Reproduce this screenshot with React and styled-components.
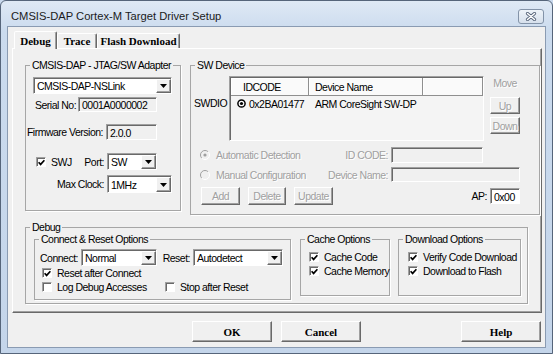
import styled, { createGlobalStyle, css } from 'styled-components';

const SANS = '"Liberation Sans", Arial, sans-serif';
const SERIF = '"Liberation Serif", "Times New Roman", serif';

const GlobalStyle = createGlobalStyle`
  html, body { margin: 0; padding: 0; }
  body { background: #c9d9ed; font-family: ${SANS}; }
  *, *::before, *::after { box-sizing: border-box; }
`;

const uiText = css`
  font-family: ${SANS};
  font-size: 10.5px;
  line-height: 12px;
  letter-spacing: -0.5px;
  color: #000;
  white-space: nowrap;
`;

const disabledText = css`
  color: #a0a0a0;
  text-shadow: 1px 1px 0 #fff;
`;

const raised = css`
  background: #f0f0f0;
  border: 1px solid;
  border-color: #fff #696969 #696969 #fff;
  box-shadow: inset -1px -1px 0 #a0a0a0;
`;

const sunken = css`
  border: 1px solid;
  border-color: #a0a0a0 #fff #fff #a0a0a0;
  box-shadow: inset 1px 1px 0 #696969;
`;

const Window = styled.div`
  width: 553px;
  height: 354px;
  display: flex;
  flex-direction: column;
  padding: 0 7px 6px;
  border: 1px solid #56657a;
  border-radius: 6px 6px 0 0;
  background: linear-gradient(#dfe9f5, #cbdbee 30px, #c4d5ea);
`;

const TitleBar = styled.div`
  height: 26px;
  flex-shrink: 0;
  display: flex;
  align-items: flex-start;
  justify-content: space-between;
  padding: 0 1px 0 3px;
`;

const Title = styled.span`
  margin-top: 8px;
  font-family: ${SANS};
  font-size: 11.2px;
  line-height: 14px;
  color: #1b1b1b;
`;

const CloseButton = styled.span`
  margin-top: 8px;
  width: 26px;
  height: 15px;
  display: flex;
  align-items: center;
  justify-content: center;
  border: 1px solid #8393a8;
  border-radius: 3px;
  background: linear-gradient(#eef3f9, #d6e0ec);
`;

const Client = styled.div`
  height: 320px;
  flex-shrink: 0;
  display: flex;
  flex-direction: column;
  padding: 4px 3px 0 4px;
  background: #f0f0f0;
  box-shadow: 0 0 0 1px #8a9bb2;
`;

const TabStrip = styled.div`
  height: 17px;
  display: flex;
  align-items: flex-end;
  padding-left: 2px;
`;

const Tab = styled.div`
  width: ${(p) => p.$w}px;
  height: ${(p) => (p.$active ? 18 : 15)}px;
  margin-bottom: ${(p) => (p.$active ? -1 : 0)}px;
  padding-top: ${(p) => (p.$active ? 2 : 0)}px;
  position: relative;
  z-index: ${(p) => (p.$active ? 1 : 0)};
  background: #f0f0f0;
  border: 1px solid;
  border-bottom: none;
  border-color: #fff #696969 transparent #fff;
  border-radius: 2px 2px 0 0;
  box-shadow: inset -1px 0 0 #a0a0a0;
  font-family: ${SERIF};
  font-weight: bold;
  font-size: 11px;
  line-height: 14px;
  text-align: center;
  white-space: nowrap;
  color: #000;
`;

const Panel = styled.div`
  height: 265px;
  flex-shrink: 0;
  padding: 10px 0 0 12px;
  ${raised};
`;

const TopRow = styled.div`
  display: flex;
  align-items: flex-start;
  gap: ${(p) => p.$gap || 9}px;
`;

const Group = styled.fieldset`
  margin: ${(p) => p.$mt || 0}px 0 0;
  min-width: 0;
  flex-shrink: 0;
  width: ${(p) => p.$w}px;
  height: ${(p) => p.$h}px;
  padding: 0 ${(p) => p.$pr || 0}px 0 ${(p) => p.$pl}px;
  border: 1px solid #a6a6a6;
  box-shadow: 1px 1px 0 #fff;

  & > legend {
    margin-left: ${(p) => 4 - p.$pl}px;
  }
`;

const Legend = styled.legend`
  padding: 0 2px;
  ${uiText};
`;

const Row = styled.div`
  display: flex;
  align-items: center;
  height: ${(p) => p.$h}px;
  margin-top: ${(p) => p.$mt || 0}px;
  padding-left: ${(p) => p.$pl || 0}px;
  gap: ${(p) => p.$gap || 0}px;
`;

const Label = styled.span`
  ${uiText};
  display: flex;
  flex-shrink: 0;
  width: ${(p) => p.$w}px;
  justify-content: ${(p) => (p.$right ? 'flex-end' : p.$center ? 'center' : 'flex-start')};
  padding: 0 ${(p) => (p.$right ? 3 : 0)}px 0 ${(p) => p.$indent || 0}px;
  margin-top: ${(p) => p.$mt || 0}px;
  ${(p) => p.$disabled && disabledText};
`;

const ComboBox = styled.div`
  ${sunken};
  display: flex;
  flex-shrink: 0;
  width: ${(p) => p.$w}px;
  height: ${(p) => p.$h || 17}px;
  margin-top: ${(p) => p.$mt || 0}px;
  padding: 1px 0 0 1px;
  background: #fff;
`;

const ComboText = styled.span`
  ${uiText};
  flex: 1;
  display: flex;
  align-items: center;
  padding-left: 2px;
`;

const DropButton = styled.span`
  ${raised};
  width: 15px;
  display: flex;
  align-items: center;
  justify-content: center;
`;

const Edit = styled.div`
  ${sunken};
  ${uiText};
  flex-shrink: 0;
  display: flex;
  align-items: center;
  width: ${(p) => p.$w}px;
  height: ${(p) => p.$h || 16}px;
  padding: 1px 0 0 3px;
  background: ${(p) => p.$bg || '#f0f0f0'};
`;

const CheckItem = styled.label`
  ${uiText};
  display: flex;
  align-items: center;
  gap: 5px;
  flex-shrink: 0;
  width: ${(p) => (p.$w ? `${p.$w}px` : 'auto')};
  padding-left: ${(p) => p.$pl || 0}px;
`;

const CheckBox = styled.span`
  ${sunken};
  width: 10px;
  height: 10px;
  flex-shrink: 0;
  display: flex;
  align-items: center;
  justify-content: center;
  padding: 1px 0 0 1px;
  background: #fff;
`;

const RadioItem = styled.span`
  ${uiText};
  ${disabledText};
  display: flex;
  align-items: center;
  gap: 6px;
  flex-shrink: 0;
  width: ${(p) => p.$w}px;
  padding-left: ${(p) => p.$pl || 0}px;
`;

const DeviceRow = styled.div`
  display: flex;
  align-items: flex-start;
  margin-top: 5px;
`;

const ListView = styled.div`
  ${sunken};
  width: 255px;
  height: 65px;
  flex-shrink: 0;
  padding: 1px 0 0 1px;
  background: #f4f4f4;
`;

const ListHeader = styled.div`
  display: flex;
  height: 18px;
`;

const HeaderCell = styled.div`
  ${uiText};
  display: flex;
  align-items: center;
  width: ${(p) => (p.$w ? `${p.$w}px` : 'auto')};
  flex: ${(p) => (p.$w ? '0 0 auto' : 1)};
  padding-left: ${(p) => p.$pl}px;
  background: #fafafa;
  border-right: 1px solid #8f8f8f;
  border-bottom: 1px solid #8f8f8f;
  box-shadow: inset 1px 1px 0 #fff;
`;

const ListRow = styled.div`
  display: flex;
  align-items: center;
  height: 15px;
`;

const Cell = styled.div`
  ${uiText};
  display: flex;
  align-items: center;
  gap: 3px;
  width: ${(p) => p.$w}px;
  padding-left: ${(p) => p.$pl}px;
`;

const MoveColumn = styled.div`
  display: flex;
  flex-direction: column;
  align-items: center;
  width: 30px;
  margin-left: 6px;
  padding-top: 1px;
`;

const SmallButton = styled.span`
  ${raised};
  ${uiText};
  ${disabledText};
  display: flex;
  align-items: center;
  justify-content: center;
  flex-shrink: 0;
  width: ${(p) => p.$w}px;
  height: ${(p) => p.$h || 18}px;
  margin-top: ${(p) => p.$mt || 0}px;
`;

const ApField = styled.div`
  display: flex;
  align-items: center;
  margin-left: auto;
`;

const OptionsRow = styled.div`
  display: flex;
  align-items: flex-start;
`;

const ButtonRow = styled.div`
  display: flex;
  height: 21px;
  margin-top: 8px;
  padding: 0 1px 0 180px;
  gap: 9px;
`;

const DialogButton = styled.span`
  ${raised};
  width: 80px;
  height: 21px;
  display: flex;
  align-items: center;
  justify-content: center;
  margin-left: ${(p) => (p.$push ? 'auto' : '0')};
  font-family: ${SERIF};
  font-weight: bold;
  font-size: 11px;
  color: #000;
`;

const Arrow = () => (
  <svg width="7" height="4" viewBox="0 0 7 4">
    <path d="M0 0h7L3.5 4z" fill="#000" />
  </svg>
);

const Combo = ({ value, w, h, mt }) => (
  <ComboBox $w={w} $h={h} $mt={mt}>
    <ComboText>{value}</ComboText>
    <DropButton>
      <Arrow />
    </DropButton>
  </ComboBox>
);

const Check = ({ checked, label, w, pl = 2 }) => (
  <CheckItem $w={w} $pl={pl}>
    <CheckBox>
      {checked && (
        <svg width="7" height="7" viewBox="0 0 7 7">
          <path d="M0.6 3.2L2.6 5.4L6.4 1.2" stroke="#000" strokeWidth="1.7" fill="none" />
        </svg>
      )}
    </CheckBox>
    <span>{label}</span>
  </CheckItem>
);

const RadioMark = ({ checked }) => (
  <svg width="10" height="10" viewBox="0 0 10 10">
    <circle cx="5" cy="5" r="4.5" fill="#f0f0f0" />
    <path d="M1.8 8.2A4.5 4.5 0 0 1 8.2 1.8" stroke="#a0a0a0" fill="none" />
    <path d="M8.2 1.8A4.5 4.5 0 0 1 1.8 8.2" stroke="#fff" fill="none" />
    {checked && <circle cx="5" cy="5" r="1.6" fill="#a0a0a0" />}
  </svg>
);

const ListRadio = () => (
  <svg width="9" height="9" viewBox="0 0 9 9">
    <circle cx="4.5" cy="4.5" r="3.6" stroke="#000" strokeWidth="1.5" fill="#fff" />
    <circle cx="4.5" cy="4.5" r="1.6" fill="#000" />
  </svg>
);

const App = () => (
  <>
    <GlobalStyle />
    <Window>
      <TitleBar>
        <Title>CMSIS-DAP Cortex-M Target Driver Setup</Title>
        <CloseButton>
          <svg width="12" height="9" viewBox="0 0 12 9">
            <path d="M2.5 1.5L9.5 7.5M9.5 1.5L2.5 7.5" stroke="#56647a" strokeWidth="3.2" strokeLinecap="round" />
            <path d="M2.5 1.5L9.5 7.5M9.5 1.5L2.5 7.5" stroke="#fff" strokeWidth="1.5" strokeLinecap="round" />
          </svg>
        </CloseButton>
      </TitleBar>

      <Client>
        <TabStrip>
          <Tab $w={43} $active>Debug</Tab>
          <Tab $w={40}>Trace</Tab>
          <Tab $w={83}>Flash Download</Tab>
        </TabStrip>

        <Panel>
          <TopRow>
            <Group $w={156} $h={152} $pl={7}>
              <Legend>CMSIS-DAP - JTAG/SW Adapter</Legend>
              <Combo value="CMSIS-DAP-NSLink" w={139} mt={6} />
              <Row $h={15} $mt={3}>
                <Label $w={45} $indent={2}>Serial No:</Label>
                <Edit $w={79} $h={15}>0001A0000002</Edit>
              </Row>
              <Row $h={16} $mt={12}>
                <Label $w={73} $right>Firmware Version:</Label>
                <Edit $w={51}>2.0.0</Edit>
              </Row>
              <Row $h={17} $mt={13}>
                <Check checked label="SWJ" w={52} pl={3} />
                <Label $w={22} $right>Port:</Label>
                <Combo value="SW" w={50} />
              </Row>
              <Row $h={18} $mt={5}>
                <Label $w={74} $right>Max Clock:</Label>
                <Combo value="1MHz" w={65} h={18} />
              </Row>
            </Group>

            <Group $w={350} $h={156} $pl={3} $pr={19}>
              <Legend>SW Device</Legend>
              <DeviceRow>
                <Label $w={35} $mt={21}>SWDIO</Label>
                <ListView>
                  <ListHeader>
                    <HeaderCell $w={78} $pl={12}>IDCODE</HeaderCell>
                    <HeaderCell $w={114} $pl={6}>Device Name</HeaderCell>
                    <HeaderCell $pl={6} />
                  </ListHeader>
                  <ListRow>
                    <Cell $w={78} $pl={6}>
                      <ListRadio />
                      0x2BA01477
                    </Cell>
                    <Cell $w={114} $pl={6}>ARM CoreSight SW-DP</Cell>
                  </ListRow>
                </ListView>
                <MoveColumn>
                  <Label $w={30} $center $disabled>Move</Label>
                  <SmallButton $w={30} $h={17} $mt={8}>Up</SmallButton>
                  <SmallButton $w={30} $h={17} $mt={3}>Down</SmallButton>
                </MoveColumn>
              </DeviceRow>

              <Row $h={16} $mt={6}>
                <RadioItem $w={120} $pl={6}>
                  <RadioMark checked />
                  Automatic Detection
                </RadioItem>
                <Label $w={77} $right $disabled>ID CODE:</Label>
                <Edit $w={92} />
              </Row>
              <Row $h={15} $mt={4}>
                <RadioItem $w={120} $pl={6}>
                  <RadioMark />
                  Manual Configuration
                </RadioItem>
                <Label $w={77} $right $disabled>Device Name:</Label>
                <Edit $w={129} $h={15} />
              </Row>
              <Row $h={18} $mt={5} $pl={7} $gap={8}>
                <SmallButton $w={39}>Add</SmallButton>
                <SmallButton $w={38}>Delete</SmallButton>
                <SmallButton $w={39}>Update</SmallButton>
                <ApField>
                  <Label $w={20} $right>AP:</Label>
                  <Edit $w={30} $bg="#fff">0x00</Edit>
                </ApField>
              </Row>
            </Group>
          </TopRow>

          <Group $w={503} $h={83} $pl={8} $mt={6}>
            <Legend>Debug</Legend>
            <OptionsRow>
              <Group $w={257} $h={67} $pl={5}>
                <Legend>Connect &amp; Reset Options</Legend>
                <Row $h={17} $mt={4}>
                  <Label $w={41}>Connect:</Label>
                  <Combo value="Normal" w={76} />
                  <Label $w={36} $right>Reset:</Label>
                  <Combo value="Autodetect" w={90} />
                </Row>
                <Row $h={14}>
                  <Check checked label="Reset after Connect" />
                </Row>
                <Row $h={14}>
                  <Check label="Log Debug Accesses" w={125} />
                  <Check label="Stop after Reset" pl={0} />
                </Row>
              </Group>

              <Group $w={90} $h={63} $pl={8} style={{ marginLeft: 9 }}>
                <Legend>Cache Options</Legend>
                <Row $h={14} $mt={5}>
                  <Check checked label="Cache Code" pl={0} />
                </Row>
                <Row $h={14}>
                  <Check checked label="Cache Memory" pl={0} />
                </Row>
              </Group>

              <Group $w={123} $h={63} $pl={9} style={{ marginLeft: 8 }}>
                <Legend>Download Options</Legend>
                <Row $h={14} $mt={5}>
                  <Check checked label="Verify Code Download" pl={0} />
                </Row>
                <Row $h={14}>
                  <Check checked label="Download to Flash" pl={0} />
                </Row>
              </Group>
            </OptionsRow>
          </Group>
        </Panel>

        <ButtonRow>
          <DialogButton>OK</DialogButton>
          <DialogButton>Cancel</DialogButton>
          <DialogButton $push>Help</DialogButton>
        </ButtonRow>
      </Client>
    </Window>
  </>
);

export default App;
